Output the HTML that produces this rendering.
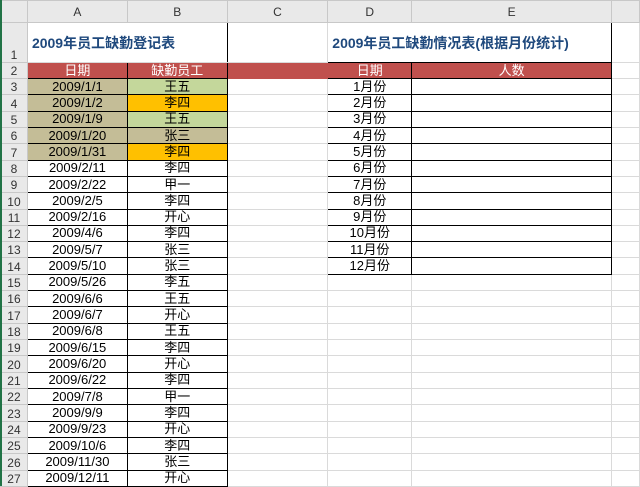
<!DOCTYPE html>
<html><head><meta charset="utf-8"><style>
body{margin:0;width:640px;height:486px;overflow:hidden;background:#fff;font-family:"Liberation Sans","Noto Sans CJK SC",sans-serif;}
table{border-collapse:collapse;table-layout:fixed;position:absolute;left:0;top:0;}
td{border:1px solid #dadada;padding:0;font-size:13px;text-align:center;white-space:nowrap;overflow:hidden;line-height:14px;color:#000;}
tr.h td{background:#e9e9e9;color:#333;font-size:12px;border-color:#c8c8c8;}
td.rn{background:#e9e9e9;color:#333;text-align:center;border-color:#c8c8c8;font-size:12px;vertical-align:bottom;}
.b{border:1px solid #000!important;}
.red{background:#c0504d;color:#fff;}
.tan{background:#c4bd97;}.grn{background:#c4d79b;}.org{background:#ffc000;}
.title{color:#1f497d;font-weight:bold;font-size:14px;text-align:left;padding-left:4px;}
.l{text-align:left;padding-left:6px}
</style></head><body>
<div style="position:absolute;left:0;top:0;width:2px;height:486px;background:#217346;z-index:2"></div>
<table>
<colgroup><col style="width:27px"><col style="width:100px"><col style="width:100px"><col style="width:101px"><col style="width:84px"><col style="width:200px"><col style="width:28px"></colgroup>
<tr class="h" style="height:22px"><td></td><td>A</td><td>B</td><td>C</td><td>D</td><td>E</td><td></td></tr>
<tr style="height:40px"><td class="rn">1</td><td colspan="2" class="title" style="border-right:1px solid #000;border-left:1px solid #000">2009年员工缺勤登记表</td><td></td><td colspan="2" class="title b">2009年员工缺勤情况表(根据月份统计)</td><td></td></tr>
<tr style="height:16px"><td class="rn">2</td><td class="red b">日期</td><td class="red b">缺勤员工</td><td class="red" style="border-color:#c0504d"></td><td class="red b">日期</td><td class="red b">人数</td><td></td></tr>
<tr style="height:16.32px"><td class="rn">3</td><td class="tan b">2009/1/1</td><td class="grn b">王五</td><td></td><td class="b">1月份</td><td class="b"></td><td></td></tr>
<tr style="height:16.32px"><td class="rn">4</td><td class="tan b">2009/1/2</td><td class="org b">李四</td><td></td><td class="b">2月份</td><td class="b"></td><td></td></tr>
<tr style="height:16.32px"><td class="rn">5</td><td class="tan b">2009/1/9</td><td class="grn b">王五</td><td></td><td class="b">3月份</td><td class="b"></td><td></td></tr>
<tr style="height:16.32px"><td class="rn">6</td><td class="tan b">2009/1/20</td><td class="tan b">张三</td><td></td><td class="b">4月份</td><td class="b"></td><td></td></tr>
<tr style="height:16.32px"><td class="rn">7</td><td class="tan b">2009/1/31</td><td class="org b">李四</td><td></td><td class="b">5月份</td><td class="b"></td><td></td></tr>
<tr style="height:16.32px"><td class="rn">8</td><td class="b">2009/2/11</td><td class="b">李四</td><td></td><td class="b">6月份</td><td class="b"></td><td></td></tr>
<tr style="height:16.32px"><td class="rn">9</td><td class="b">2009/2/22</td><td class="b">甲一</td><td></td><td class="b">7月份</td><td class="b"></td><td></td></tr>
<tr style="height:16.32px"><td class="rn">10</td><td class="b">2009/2/5</td><td class="b">李四</td><td></td><td class="b">8月份</td><td class="b"></td><td></td></tr>
<tr style="height:16.32px"><td class="rn">11</td><td class="b">2009/2/16</td><td class="b">开心</td><td></td><td class="b">9月份</td><td class="b"></td><td></td></tr>
<tr style="height:16.32px"><td class="rn">12</td><td class="b">2009/4/6</td><td class="b">李四</td><td></td><td class="b">10月份</td><td class="b"></td><td></td></tr>
<tr style="height:16.32px"><td class="rn">13</td><td class="b">2009/5/7</td><td class="b">张三</td><td></td><td class="b">11月份</td><td class="b"></td><td></td></tr>
<tr style="height:16.32px"><td class="rn">14</td><td class="b">2009/5/10</td><td class="b">张三</td><td></td><td class="b">12月份</td><td class="b"></td><td></td></tr>
<tr style="height:16.32px"><td class="rn">15</td><td class="b">2009/5/26</td><td class="b">李五</td><td></td><td></td><td></td><td></td></tr>
<tr style="height:16.32px"><td class="rn">16</td><td class="b">2009/6/6</td><td class="b">王五</td><td></td><td></td><td></td><td></td></tr>
<tr style="height:16.32px"><td class="rn">17</td><td class="b">2009/6/7</td><td class="b">开心</td><td></td><td></td><td></td><td></td></tr>
<tr style="height:16.32px"><td class="rn">18</td><td class="b">2009/6/8</td><td class="b">王五</td><td></td><td></td><td></td><td></td></tr>
<tr style="height:16.32px"><td class="rn">19</td><td class="b">2009/6/15</td><td class="b">李四</td><td></td><td></td><td></td><td></td></tr>
<tr style="height:16.32px"><td class="rn">20</td><td class="b">2009/6/20</td><td class="b">开心</td><td></td><td></td><td></td><td></td></tr>
<tr style="height:16.32px"><td class="rn">21</td><td class="b">2009/6/22</td><td class="b">李四</td><td></td><td></td><td></td><td></td></tr>
<tr style="height:16.32px"><td class="rn">22</td><td class="b">2009/7/8</td><td class="b">甲一</td><td></td><td></td><td></td><td></td></tr>
<tr style="height:16.32px"><td class="rn">23</td><td class="b">2009/9/9</td><td class="b">李四</td><td></td><td></td><td></td><td></td></tr>
<tr style="height:16.32px"><td class="rn">24</td><td class="b">2009/9/23</td><td class="b">开心</td><td></td><td></td><td></td><td></td></tr>
<tr style="height:16.32px"><td class="rn">25</td><td class="b">2009/10/6</td><td class="b">李四</td><td></td><td></td><td></td><td></td></tr>
<tr style="height:16.32px"><td class="rn">26</td><td class="b">2009/11/30</td><td class="b">张三</td><td></td><td></td><td></td><td></td></tr>
<tr style="height:16.32px"><td class="rn">27</td><td class="b">2009/12/11</td><td class="b">开心</td><td></td><td></td><td></td><td></td></tr>
</table>
</body></html>
